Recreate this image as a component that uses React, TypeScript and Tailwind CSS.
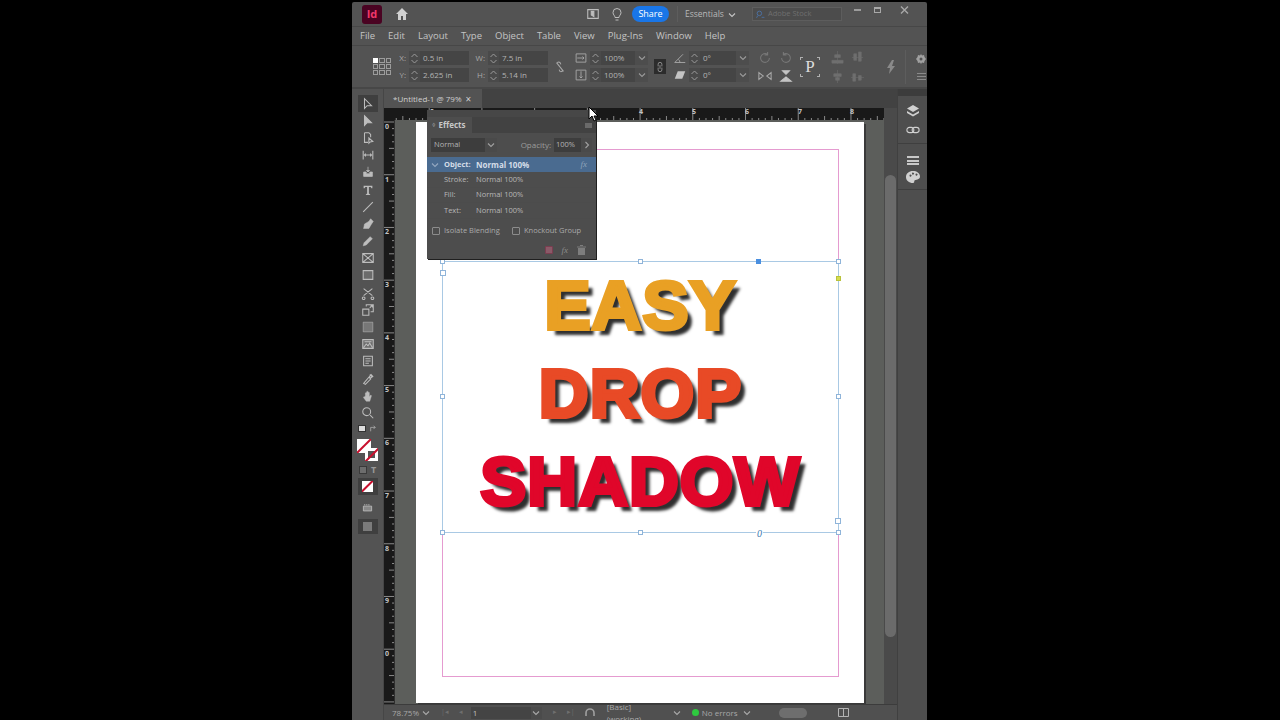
import type { ReactNode } from 'react'

const Ico = ({ children, size = 16, className = '' }: { children: ReactNode; size?: number; className?: string }) => (
  <svg width={size} height={size} viewBox="0 0 16 16" fill="none" stroke="currentColor" strokeWidth="1.2" className={className}>
    {children}
  </svg>
)

const Chevron = ({ className = '' }: { className?: string }) => (
  <svg width="8" height="8" viewBox="0 0 8 8" fill="none" stroke="currentColor" strokeWidth="1.1" className={className}>
    <path d="M1 2.5 4 5.5 7 2.5" />
  </svg>
)

const Stepper = () => (
  <div className="w-[11px] h-full flex flex-col items-center justify-center gap-[1px] text-[#9a9a9a] bg-[#4a4a4a] shrink-0">
    <svg width="7" height="5" viewBox="0 0 7 5" fill="none" stroke="currentColor"><path d="M.5 4 3.5 1 6.5 4" /></svg>
    <svg width="7" height="5" viewBox="0 0 7 5" fill="none" stroke="currentColor"><path d="M.5 1 3.5 4 6.5 1" /></svg>
  </div>
)

const Field = ({ value, w, drop = false }: { value: string; w: string; drop?: boolean }) => (
  <div className={`${w} h-[14px] flex items-center bg-[#454545] text-[8px] text-[#b4b4b4] shrink-0`}>
    <Stepper />
    <span className="pl-[3px] flex-1 leading-none">{value}</span>
    {drop && (
      <div className="w-[13px] h-full flex items-center justify-center bg-[#4d4d4d] text-[#9a9a9a]">
        <Chevron />
      </div>
    )}
  </div>
)

const tools: ReactNode[] = [
  <path key="a" d="M4 2v11l3-3 5 0z" />,
  <path key="a" d="M4 2v11l3-3 5 0z" fill="currentColor" />,
  <path key="a" d="M4 2h5l2 2v3M4 2v11h4M9 8v6l1.500-1.500 3-.5z" />,
  <path key="a" d="M2.500 3v10M13.500 3v10M4.500 8h7M5.500 6.500 4 8l1.500 1.500M10.500 6.500 12 8l-1.500 1.500" />,
  <path key="a" d="M3 8v5h10V8H10v2H6V8zM8 2v6M6 6l2 2 2-2" fill="currentColor" strokeWidth="0.8" />,
  <path key="a" d="M3 3h10v3h-1l-1-1.500H9V12l1.500 1v.8h-5V13L7 12V4.500H5L4 6H3z" fill="currentColor" stroke="none" />,
  <path key="a" d="M2.500 13.500 13.500 2.500" />,
  <path key="a" d="M3 13l1-5 5-3 3 3-3 5zM9 5l2-3 3 3-2 3M3 13l3.500-3.500" fill="currentColor" strokeWidth="0.6" />,
  <path key="a" d="M2.500 13.500l1-3.500 7-7 2.500 2.500-7 7z" fill="currentColor" strokeWidth="0.6" />,
  <path key="a" d="M2 3h12v10H2zM2 3l12 10M14 3 2 13" />,
  <path key="a" d="M2.500 3h11v10h-11z" fill="#6b6b6b" />,
  <path key="a" d="M3 3l10 8M13 3 3 11M3 12.500a1.500 1.500 0 1 0 .1 0M13 12.500a1.500 1.500 0 1 0 .1 0" />,
  <path key="a" d="M2 7h7v7H2zM6 4V2h8v8h-3M11 3h2v2M12.500 3 10 5.500" />,
  <path key="a" d="M2.500 2.500h11v11h-11z" fill="#777777" strokeWidth="0.6" />,
  <path key="a" d="M2 3h12v10H2zM3 12l3-4 2 2 2-3 3 5M4 5.500h8" fill="#6e6e6e" />,
  <path key="a" d="M3 2.500h10v11H3zM5 5.500h6M5 8h6M5 10.500h4" />,
  <path key="a" d="M3 13l6-7 2 2-6 6zM10 3l3 3M9.500 5.500l2-2.500 2 2-2.500 2z" />,
  <path key="a" d="M5 8V4.500a1 1 0 0 1 1.500 0V8V3a1 1 0 0 1 1.500 0v5-4a1 1 0 0 1 1.500 0v5l1-1.500c.8-.8 1.800 0 1.300.8L10 14H6L3 10c-.5-1 .5-1.500 1-1z" fill="currentColor" strokeWidth="0.5" />,
  <path key="a" d="M10.500 10.500 14 14M11 6.500a4.500 4.500 0 1 1-9 0 4.500 4.500 0 0 1 9 0z" />,
]

const FillStroke = () => (
  <div className="relative w-[23px] h-[23px] mt-[5px] ml-[1px]">
    <div className="absolute left-0 top-0 w-[14px] h-[14px] bg-white overflow-hidden">
      <div className="absolute left-[-3px] top-[6px] w-[20px] h-[2px] bg-[#c8102e] -rotate-45" />
    </div>
    <div className="absolute left-[8px] top-[9px] w-[13px] h-[13px] bg-white overflow-hidden">
      <div className="absolute left-[3px] top-[3px] w-[7px] h-[7px] bg-[#555555]" />
      <div className="absolute left-[-3px] top-[6px] w-[20px] h-[2px] bg-[#c8102e] -rotate-45" />
    </div>
  </div>
)

const Toolbar = () => (
  <div className="w-[32px] shrink-0 bg-[#535353] border-r border-[#464646] flex flex-col items-center pt-[6px] text-[#bdbdbd]">
    {tools.map((t, i) => (
      <div key={i} className={`w-[20px] h-[17.2px] flex items-center justify-center ${i === 0 ? 'bg-[#3f3f3f]' : ''}`}>
        <Ico size={14}>{t}</Ico>
      </div>
    ))}
    <div className="flex items-center gap-[3px] mt-[2px] h-[10px]">
      <div className="w-[8px] h-[7px] bg-[#dcdcdc] border border-[#333333]" />
      <Ico size={9}><path d="M3 13V6h8M8 3l3 3-3 3" /></Ico>
    </div>
    <FillStroke />
    <div className="flex items-center gap-[4px] mt-[2px] h-[12px]">
      <div className="w-[8px] h-[8px] bg-[#6d6d6d] border border-[#3a3a3a]" />
      <span className="text-[9px] font-bold text-[#9a9a9a] leading-none">T</span>
    </div>
    <div className="w-[20px] h-[17px] mt-[2px] bg-[#3f3f3f] flex items-center justify-center">
      <div className="relative w-[11px] h-[11px] bg-white overflow-hidden">
        <div className="absolute left-[-3px] top-[4px] w-[17px] h-[2px] bg-[#c8102e] -rotate-45" />
      </div>
    </div>
    <div className="h-[14px] mt-[6px] flex items-center">
      <Ico size={11}><path d="M2 6h12v7H2zM4 3v2M7 3v2M10 3v2" fill="#888888" /></Ico>
    </div>
    <div className="w-[20px] h-[15px] mt-[4px] bg-[#3f3f3f] flex items-center justify-center">
      <div className="w-[9px] h-[9px] bg-[#7b7b7b]" />
    </div>
  </div>
)

const MenuBar = () => (
  <div className="h-[19px] flex items-center gap-[13px] pl-[8px] text-[9.5px] text-[#c4c4c4] border-b border-[#474747]">
    {['File', 'Edit', 'Layout', 'Type', 'Object', 'Table', 'View', 'Plug-Ins', 'Window', 'Help'].map((m) => (
      <span key={m}>{m}</span>
    ))}
  </div>
)

const TitleBar = () => (
  <div className="h-[25px] flex items-center pl-[10px] pr-[14px] text-[#bdbdbd] border-b border-[#474747]">
    <div className="w-[20px] h-[19px] rounded-[3px] bg-[#4a0322] flex items-center justify-center text-[11px] font-bold text-[#f0386b]">Id</div>
    <svg width="14" height="14" viewBox="0 0 14 14" fill="#d0d0d0" className="ml-[13px]"><path d="M7 1 1 7h2v6h3V9h2v4h3V7h2z" /></svg>
    <Ico size={14} className="ml-[177px]"><path d="M2 3h12v10H2z" /><path d="M6 5h3v6l-3-2z" fill="currentColor" /></Ico>
    <svg width="12" height="15" viewBox="0 0 12 15" fill="none" stroke="currentColor" className="ml-[11px]"><path d="M4 10.500C4 8.500 2 8 2 5.500a4 4 0 0 1 8 0C10 8 8 8.500 8 10.500zM4.500 13h3" /></svg>
    <div className="ml-[9px] w-[37px] h-[16px] rounded-full bg-[#1976e8] text-white text-[9px] flex items-center justify-center">Share</div>
    <div className="ml-[8px] w-[1px] h-[16px] bg-[#5d5d5d]" />
    <span className="ml-[7px] text-[8.5px] text-[#b8b8b8]">Essentials</span>
    <Chevron className="ml-[4px] mt-[2px] text-[#c4c4c4]" />
    <div className="ml-[16px] w-[90px] h-[14px] border border-[#5d5d5d] bg-[#4c4c4c] flex items-center pl-[3px] gap-[3px]">
      <Ico size={9} className="text-[#4a7fc4]"><path d="M10 6a4 4 0 1 1-8 0 4 4 0 0 1 8 0zM3 10 1 14M10 13h5" /></Ico>
      <span className="text-[7.5px] text-[#6f6f6f]">Adobe Stock</span>
    </div>
    <div className="ml-auto flex items-center gap-[13px] -mt-[8px]">
      <div className="w-[7px] h-[2px] bg-[#9c9c9c]" />
      <div className="w-[7px] h-[6px] border border-t-2 border-[#a8a8a8]" />
      <svg width="16" height="9" viewBox="0 0 16 9" fill="none" stroke="#a8a8a8" strokeWidth="1.4" className="ml-[3px]"><path d="M4 .5l7 7M11 .5l-7 7" /></svg>
    </div>
  </div>
)

const Label = ({ children, className = '' }: { children: ReactNode; className?: string }) => (
  <span className={`text-[8px] text-[#a8a8a8] leading-none ${className}`}>{children}</span>
)

const FieldRow = ({ label, value, w, drop }: { label: string; value: string; w: string; drop?: boolean }) => (
  <div className="flex items-center gap-[3px]">
    <Label className="w-[10px] text-right">{label}</Label>
    <Field value={value} w={w} drop={drop} />
  </div>
)

const RefPoint = () => (
  <div className="grid grid-cols-3 gap-[1px] w-[18px] shrink-0">
    {Array.from({ length: 9 }).map((_, i) => (
      <div key={i} className={`h-[5px] border border-[#9c9c9c] ${i === 0 ? 'bg-white border-white' : ''}`} />
    ))}
  </div>
)

const ControlPanel = () => (
  <div className="h-[41px] flex items-center pl-[21px] text-[#a8a8a8]">
    <RefPoint />
    <div className="ml-[5px] flex flex-col gap-[3px]">
      <FieldRow label="X:" value="0.5 in" w="w-[60px]" />
      <FieldRow label="Y:" value="2.625 in" w="w-[60px]" />
    </div>
    <div className="ml-[6px] flex flex-col gap-[3px]">
      <FieldRow label="W:" value="7.5 in" w="w-[60px]" />
      <FieldRow label="H:" value="5.14 in" w="w-[60px]" />
    </div>
    <Ico size={14} className="ml-[5px]"><path d="M5 3a2 2 0 0 1 3 0l1 2M7 11l1 2a2 2 0 0 0 3-1M4 3l8 10" /></Ico>
    <div className="ml-[8px] flex flex-col gap-[3px]">
      <div className="flex items-center gap-[3px]">
        <Ico size={12}><path d="M1.500 2.500h13v11h-13zM3 8h9M10 6l2 2-2 2" /></Ico>
        <Field value="100%" w="w-[58px]" drop />
      </div>
      <div className="flex items-center gap-[3px]">
        <Ico size={12}><path d="M1.500 1.500h13v13h-13zM8 3v9M6 10l2 2 2-2" /></Ico>
        <Field value="100%" w="w-[58px]" drop />
      </div>
    </div>
    <div className="ml-[6px] w-[12px] h-[15px] bg-[#2c2c2c] flex items-center justify-center">
      <Ico size={10}><path d="M5 7V3.500a3 3 0 0 1 6 0V7M5 9v3.500a3 3 0 0 0 6 0V9M8 5v6" /></Ico>
    </div>
    <div className="ml-[8px] flex flex-col gap-[3px]">
      <div className="flex items-center gap-[3px]">
        <Ico size={12}><path d="M1 14h14M1 14 12 3M8 14a6 6 0 0 0-2-4" /></Ico>
        <Field value="0°" w="w-[60px]" drop />
      </div>
      <div className="flex items-center gap-[3px]">
        <svg width="12" height="12" viewBox="0 0 16 16" fill="#c4c4c4"><path d="M5 3h10l-4 10H1z" /></svg>
        <Field value="0°" w="w-[60px]" drop />
      </div>
    </div>
    <div className="ml-[9px] grid grid-cols-2 gap-x-[7px] gap-y-[4px] text-[#777777]">
      <Ico size={14}><path d="M13 8a5 5 0 1 1-2-4M11 1v3.500H7.500" /></Ico>
      <Ico size={14}><path d="M3 8a5 5 0 1 0 2-4M5 1v3.500h3.500" /></Ico>
      <Ico size={14} className="text-[#a8a8a8]"><path d="M1 4v8l5-4zM15 4v8l-5-4z" /></Ico>
      <Ico size={14} className="text-[#c4c4c4]"><path d="M4 2h8L8 6zM2 14h12L8 9z" fill="currentColor" /></Ico>
    </div>
    <div className="relative ml-[7px] w-[20px] h-[20px] flex items-center justify-center text-[17px] text-[#dcdcdc] font-['Liberation_Serif',serif] leading-none">
      P
      <div className="absolute left-0 top-0 w-[3px] h-[3px] border-l border-t border-[#b0b0b0]" />
      <div className="absolute right-0 top-0 w-[3px] h-[3px] border-r border-t border-[#b0b0b0]" />
      <div className="absolute left-0 bottom-0 w-[3px] h-[3px] border-l border-b border-[#b0b0b0]" />
      <div className="absolute right-0 bottom-0 w-[3px] h-[3px] border-r border-b border-[#b0b0b0]" />
    </div>
    <div className="ml-[10px] grid grid-cols-2 gap-x-[5px] gap-y-[4px] text-[#6f6f6f]">
      <Ico size={15}><path d="M8 1v14M5 5h6v3H5zM2 11h12v3H2z" fill="currentColor" strokeWidth="0.6" /></Ico>
      <Ico size={15}><path d="M2 8h12M4 4v7h3V4zM9 2v10h3V2z" fill="currentColor" strokeWidth="0.6" /></Ico>
      <Ico size={15}><path d="M8 1v14M4 5h8v3H4zM6 9h4v3H6z" fill="currentColor" strokeWidth="0.6" /></Ico>
      <Ico size={15}><path d="M1 9h14M3 5v8h3V5zM9 7v5h3V7z" fill="currentColor" strokeWidth="0.6" /></Ico>
    </div>
    <svg width="9" height="14" viewBox="0 0 9 14" fill="#8a8a8a" className="ml-[22px]"><path d="M5 0 0 8h3l-1 6 6-8H5l2-6z" /></svg>
    <div className="ml-[9px] h-[34px] w-[1px] bg-[#5d5d5d]" />
    <div className="ml-[10px] flex flex-col items-center gap-[9px] text-[#a0a0a0]">
      <svg width="10" height="10" viewBox="0 0 10 10" fill="currentColor"><path d="M5 0l1 1.500 2-.5.500 2L10 5 8.500 7 8 9l-2-.5L5 10 4 8.500 2 9l-.5-2L0 5l1.500-2L2 1l2 .5zM5 3.500a1.500 1.500 0 1 0 0 3 1.500 1.500 0 0 0 0-3z" /></svg>
      <div className="w-[9px] h-[7px] flex flex-col justify-between">
        <div className="h-[1px] bg-[#8a8a8a]" />
        <div className="h-[1px] bg-[#8a8a8a]" />
        <div className="h-[1px] bg-[#8a8a8a]" />
      </div>
    </div>
  </div>
)

const Handle = ({ className }: { className: string }) => (
  <div className={`absolute w-[5px] h-[5px] bg-white border border-[#8fb4d9] ${className}`} />
)

const HRuler = () => (
  <div className="h-[12px] flex-1 bg-[#191919] relative overflow-hidden">
    <svg width="490" height="12" className="absolute left-0 top-0">
      {Array.from({ length: 80 }).map((_, i) => (
        <line key={i} x1={34.200 + i * 6.59 - 6.59 * 8} x2={34.200 + i * 6.59 - 6.59 * 8} y1={i % 8 === 0 ? 0 : i % 4 === 0 ? 8 : 10} y2="12" stroke="#8a8a8a" strokeWidth="1" />
      ))}
    </svg>
    {[
      ['0', 35],
      ['4', 244],
      ['5', 297],
      ['6', 350],
      ['7', 403],
      ['8', 455],
    ].map(([n, x]) => (
      <span key={n} className="absolute top-[-1px] text-[7px] font-bold text-[#c4c4c4]" style={{ left: x as number }}>{n}</span>
    ))}
  </div>
)

const VRuler = () => (
  <div className="w-[11px] shrink-0 bg-[#191919] relative overflow-hidden pt-[2px] border-r border-[#2e2e2e]">
    <svg width="11" height="590" className="absolute left-0 top-0">
      {Array.from({ length: 90 }).map((_, i) => (
        <line key={i} y1={2 + i * 6.59} y2={2 + i * 6.59} x1={i % 8 === 0 ? 0 : i % 4 === 0 ? 5 : 8} x2="11" stroke="#8a8a8a" strokeWidth="1" />
      ))}
    </svg>
    {['0', '1', '2', '3', '4', '5', '6', '7', '8', '9', '0'].map((n, i) => (
      <div key={i} className="relative h-[52.7px] text-[7px] font-bold text-[#c4c4c4] pl-[1px] leading-[10px]">{n}</div>
    ))}
  </div>
)

const lines = [
  { text: 'EASY', cls: 'text-[#e9a024] [-webkit-text-stroke:4px_#e9a024]' },
  { text: 'DROP', cls: 'text-[#e84a26] [-webkit-text-stroke:4px_#e84a26]' },
  { text: 'SHADOW', cls: 'text-[#e0062a] [-webkit-text-stroke:4px_#e0062a]' },
]

const Page = () => (
  <div className="relative w-[448px] h-[581px] ml-[21px] mt-[2px] bg-white shadow-[2px_2px_0_#3a3a3a]">
    <div className="absolute left-[26px] top-[27px] w-[397px] h-[528px] border border-[#e59bd0]" />
    <div className="absolute left-[26px] top-[139px] w-[397px] h-[272px] border border-[#a9c9e4] flex flex-col items-center pt-[-1px]">
      {lines.map((l) => (
        <div
          key={l.text}
          className={`h-[88px] leading-[88px] text-[69px] font-bold tracking-[1px] font-['Liberation_Sans',sans-serif] [text-shadow:6px_6px_3px_#2f2f2f] ${l.cls}`}
        >
          {l.text}
        </div>
      ))}
      <span className="absolute left-[313px] bottom-[-7px] bg-white px-[1px] text-[10px] italic leading-none text-[#3b78b0] font-['Liberation_Serif',serif]">0</span>
      <Handle className="left-[-3px] top-[-3px]" />
      <Handle className="left-[195px] top-[-3px]" />
      <Handle className="right-[-3px] top-[-3px]" />
      <Handle className="left-[-3px] top-[132px]" />
      <Handle className="right-[-3px] top-[132px]" />
      <Handle className="left-[-3px] bottom-[-3px]" />
      <Handle className="left-[195px] bottom-[-3px]" />
      <Handle className="right-[-3px] bottom-[-3px]" />
      <div className="absolute left-[-3px] top-[8px] w-[6px] h-[6px] bg-white border border-[#8fb4d9]" />
      <div className="absolute right-[-3px] bottom-[8px] w-[6px] h-[6px] bg-white border border-[#8fb4d9]" />
      <div className="absolute left-[313px] top-[-3px] w-[5px] h-[5px] bg-[#4a8fe0]" />
      <div className="absolute right-[-3px] top-[14px] w-[5px] h-[5px] bg-[#d5dc4e] border border-[#b9c23c]" />
    </div>
  </div>
)

const EffectRow = ({ name, value }: { name: string; value: string }) => (
  <div className="h-[15.500px] flex items-center pl-[17px] border-b border-[#4c4c4c] text-[7.5px] text-[#b8b8b8]">
    <span className="w-[32px]">{name}</span>
    <span>{value}</span>
  </div>
)

const Check = ({ label, className = '' }: { label: string; className?: string }) => (
  <div className={`flex items-center gap-[4px] text-[7.5px] text-[#aaaaaa] ${className}`}>
    <div className="w-[8px] h-[8px] rounded-[1px] border border-[#8c8c8c]" />
    <span>{label}</span>
  </div>
)

const EffectsPanel = () => (
  <div className="absolute left-[75px] top-[108px] w-[169px] h-[149px] bg-[#4d4d4d] shadow-[1px_1px_0_#1f1f1f] flex flex-col">
    <div className="h-[7px] bg-[#474747]" />
    <div className="h-[16px] flex bg-[#424242] pr-[4px] items-center justify-between">
      <div className="w-[45px] h-full bg-[#4d4d4d] flex items-center pl-[5px] gap-[3px] text-[8px] font-bold text-[#c8c8c8]">
        <span className="text-[6px] text-[#8a8a8a] leading-none">◊</span>
        Effects
      </div>
      <div className="w-[7px] h-[5px] bg-[#6a6a6a]" />
    </div>
    <div className="h-[24px] flex items-center pl-[4px] pr-[4px]">
      <div className="w-[66px] h-[14px] bg-[#3d3d3d] flex items-center justify-between pl-[3px] text-[7.5px] text-[#b4b4b4]">
        Normal
        <div className="w-[12px] h-full bg-[#4a4a4a] flex items-center justify-center text-[#a0a0a0]"><Chevron /></div>
      </div>
      <span className="ml-auto text-[8px] text-[#9c9c9c]">Opacity:</span>
      <div className="ml-[3px] w-[38px] h-[14px] bg-[#3d3d3d] flex items-center justify-between pl-[2px] text-[7.5px] text-[#b4b4b4]">
        100%
        <div className="w-[11px] h-full bg-[#4a4a4a] flex items-center justify-center text-[#a0a0a0]">
          <Chevron className="-rotate-90" />
        </div>
      </div>
    </div>
    <div className="h-[15px] bg-[#4a6b90] flex items-center pl-[4px] pr-[9px] text-[7.5px] font-bold text-[#d4dde8]">
      <Chevron className="text-[#94a8c0]" />
      <span className="w-[37px] pl-[5px]">Object:</span>
      <span className="text-[8px]">Normal 100%</span>
      <span className="ml-auto italic text-[9px] font-normal text-[#8fa3ba] font-['Liberation_Serif',serif]">fx</span>
    </div>
    <EffectRow name="Stroke:" value="Normal 100%" />
    <EffectRow name="Fill:" value="Normal 100%" />
    <EffectRow name="Text:" value="Normal 100%" />
    <div className="h-[21px] flex items-center pl-[5px] mt-[2px]">
      <Check label="Isolate Blending" className="w-[80px]" />
      <Check label="Knockout Group" />
    </div>
    <div className="flex-1 flex items-center justify-end gap-[9px] pr-[10px]">
      <div className="w-[8px] h-[8px] rounded-[1px] bg-[#8a5a68] border border-[#7b3d50]" />
      <span className="italic text-[9px] text-[#8c8c8c] font-['Liberation_Serif',serif] leading-none">fx</span>
      <svg width="9" height="10" viewBox="0 0 9 10" fill="#7d7d7d"><path d="M0 1.500h9v1H0zM3 0h3v1H3zM1 3h7v7H1z" /></svg>
    </div>
  </div>
)

const StatusBar = () => (
  <div className="h-[16px] flex items-center pl-[8px] bg-[#505050] border-t border-[#3c3c3c] text-[8px] text-[#a8a8a8] shrink-0">
    <span className="w-[27px]">78.75%</span>
    <Chevron className="ml-[3px]" />
    <span className="ml-[11px] text-[7px] text-[#6f6f6f] flex gap-[10px]"><span>|◂</span><span>◂</span></span>
    <div className="ml-[8px] w-[60px] h-[12px] bg-[#444444] pl-[2px] text-[#c0c0c0] leading-[12px]">1</div>
    <div className="w-[11px] h-[12px] bg-[#4b4b4b] flex items-center justify-center"><Chevron /></div>
    <span className="ml-[11px] text-[7px] text-[#6f6f6f] flex gap-[10px]"><span>▸</span><span>▸|</span></span>
    <svg width="11" height="9" viewBox="0 0 11 9" fill="none" stroke="#a0a0a0" strokeWidth="1.600" className="ml-[10px]"><path d="M1 8V5a4 4 0 0 1 8 0v3" /></svg>
    <span className="ml-[11px] w-[55px]">[Basic] (working)</span>
    <Chevron className="ml-[11px]" />
    <div className="ml-[11px] w-[7px] h-[7px] rounded-full bg-[#2ec93f]" />
    <span className="ml-[3px] w-[38px]">No errors</span>
    <Chevron className="ml-[3px]" />
    <div className="ml-[28px] w-[28px] h-[10px] rounded-full bg-[#6e6e6e]" />
    <svg width="11" height="9" viewBox="0 0 11 9" fill="none" stroke="#b4b4b4" className="ml-[31px]"><path d="M.5.500h10v8H.5zM5.500.500v8" /></svg>
  </div>
)

const Dock = () => (
  <div className="w-[30px] shrink-0 bg-[#4e4e4e] border-l border-[#404040] flex flex-col items-center text-[#d0d0d0]">
    <div className="w-full h-[7px] bg-[#3c3c3c]" />
    <div className="w-full flex flex-col items-center gap-[5px] pt-[8px] pb-[6px] border-b border-[#3f3f3f]">
      <svg width="14" height="14" viewBox="0 0 14 14" fill="currentColor"><path d="M7 1l6 3.500L7 8 1 4.500zM1 7l6 3.500L13 7v2L7 12.500 1 9z" /></svg>
      <Ico size={14}><path d="M6 5H4a3 3 0 0 0 0 6h2a3 3 0 0 0 0-6zM10 5h2a3 3 0 0 1 0 6h-2a3 3 0 0 1 0-6z" /></Ico>
    </div>
    <div className="w-full flex flex-col items-center gap-[6px] pt-[12px] pb-[6px] border-b border-[#3f3f3f]">
      <div className="w-[12px] h-[9px] flex flex-col justify-between">
        <div className="h-[2px] bg-[#c8c8c8]" />
        <div className="h-[2px] bg-[#c8c8c8]" />
        <div className="h-[2px] bg-[#c8c8c8]" />
      </div>
      <svg width="14" height="12" viewBox="0 0 14 12" fill="currentColor"><path d="M7 0C3 0 0 2.500 0 6s3 6 7 6c1.500 0 1-1.500 1.500-2.500S14 9 14 5.500C14 2 10.500 0 7 0zM3.500 4.500a1 1 0 1 1 0 .1zM6 2.500a1 1 0 1 1 0 .1zM9.500 3.500a1 1 0 1 1 0 .1z" fillRule="evenodd" /></svg>
    </div>
  </div>
)

export default function App() {
  return (
    <div className="w-[1280px] h-[720px] bg-black pl-[352px] pt-[2px] overflow-hidden font-['Open_Sans',sans-serif]">
      <div className="relative w-[575px] h-[718px] bg-[#535353] flex flex-col rounded-t-[2px]">
        <TitleBar />
        <MenuBar />
        <ControlPanel />
        <div className="h-[2px] bg-[#474747]" />
        <div className="flex-1 flex min-h-0">
          <Toolbar />
          <div className="flex-1 flex flex-col min-w-0">
            <div className="h-[19px] bg-[#424242] flex shrink-0">
              <div className="w-[98px] bg-[#535353] flex items-center pl-[9px] gap-[4px] text-[8px] text-[#cfcfcf]">
                <span>*Untitled-1 @ 79%</span>
                <span className="text-[10px] leading-none">×</span>
              </div>
            </div>
            <div className="flex-1 flex min-h-0">
              <div className="flex-1 flex flex-col min-w-0">
                <div className="flex h-[12px] shrink-0">
                  <div className="w-[11px] bg-[#191919]" />
                  <HRuler />
                </div>
                <div className="flex-1 flex min-h-0">
                  <VRuler />
                  <div className="flex-1 bg-[#5c5e5b] overflow-hidden">
                    <Page />
                  </div>
                </div>
              </div>
              <div className="w-[13px] shrink-0 bg-[#4a4a4a] pt-[67px] pb-[67px] px-[1px] flex flex-col">
                <div className="h-[462px] rounded-full bg-[#6b6b6b]" />
              </div>
            </div>
            <StatusBar />
          </div>
          <Dock />
        </div>
        <EffectsPanel />
        <svg width="12" height="16" viewBox="0 0 12 16" className="absolute left-[236px] top-[104px]">
          <path d="M1 1v12l3-3 2 5 2-1-2-4h4z" fill="#ffffff" stroke="#000000" />
        </svg>
      </div>
    </div>
  )
}
